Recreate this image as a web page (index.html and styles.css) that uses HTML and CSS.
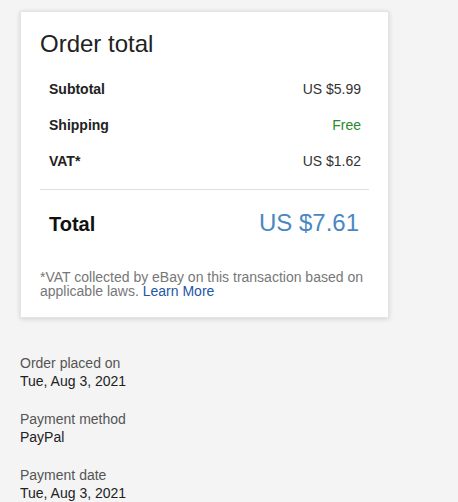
FILE: index.html
```html
<!DOCTYPE html>
<html lang="en">
<head>
    <meta charset="UTF-8">
    <meta name="viewport" content="width=device-width, initial-scale=1.0">
    <title>Order details</title>
    <link rel="stylesheet" href="styles.css">
</head>
<body>
    <div class="page">
        <section class="card">
            <h2 class="card-title">Order total</h2>
            <div class="line-items">
                <div class="line">
                    <span class="label">Subtotal</span>
                    <span class="value">US $5.99</span>
                </div>
                <div class="line">
                    <span class="label">Shipping</span>
                    <span class="value value-free">Free</span>
                </div>
                <div class="line">
                    <span class="label">VAT*</span>
                    <span class="value">US $1.62</span>
                </div>
            </div>
            <div class="total">
                <span class="total-label">Total</span>
                <span class="total-value">US $7.61</span>
            </div>
            <p class="note">*VAT collected by eBay on this transaction based on applicable laws. <a href="#">Learn More</a></p>
        </section>

        <dl class="info">
            <div class="info-group">
                <dt>Order placed on</dt>
                <dd>Tue, Aug 3, 2021</dd>
            </div>
            <div class="info-group">
                <dt>Payment method</dt>
                <dd>PayPal</dd>
            </div>
            <div class="info-group">
                <dt>Payment date</dt>
                <dd>Tue, Aug 3, 2021</dd>
            </div>
        </dl>
    </div>
</body>
</html>
```

FILE: styles.css
```css
* {
    margin: 0;
    padding: 0;
    box-sizing: border-box;
}
body {
    font-family: Arial, "Liberation Sans", Helvetica, sans-serif;
    background-color: #f4f4f4;
    color: #333;
    font-size: 14px;
}
.page {
    padding: 11px 20px 0 20px;
}
.card {
    width: 369px;
    background-color: #fff;
    border: 1px solid #e4e4e4;
    box-shadow: 0 1px 5px rgba(0, 0, 0, 0.14);
    padding: 18px 19px 19px 19px;
}
.card-title {
    font-size: 24px;
    font-weight: normal;
    line-height: 28px;
    color: #222;
}
.line-items {
    margin-top: 13px;
    padding: 0 8px 0 9px;
}
.line {
    display: flex;
    justify-content: space-between;
    line-height: 36px;
}
.label {
    font-weight: bold;
    color: #222;
}
.value {
    color: #333;
}
.value-free {
    color: #2a8a2a;
}
.total {
    display: flex;
    justify-content: space-between;
    align-items: baseline;
    margin-top: 10px;
    border-top: 1px solid #ddd;
    padding: 13px 10px 0 9px;
    line-height: 40px;
}
.total-label {
    font-size: 20px;
    font-weight: bold;
    color: #111;
}
.total-value {
    font-size: 24px;
    color: #4a88c2;
}
.note {
    margin-top: 26px;
    line-height: 14px;
    color: #777;
}
.note a {
    color: #2356a5;
    text-decoration: none;
}
.info {
    margin-top: 36px;
    display: flex;
    flex-direction: column;
    gap: 20px;
}
.info-group {
    line-height: 18px;
}
.info dt {
    color: #555;
}
.info dd {
    color: #222;
}
```
